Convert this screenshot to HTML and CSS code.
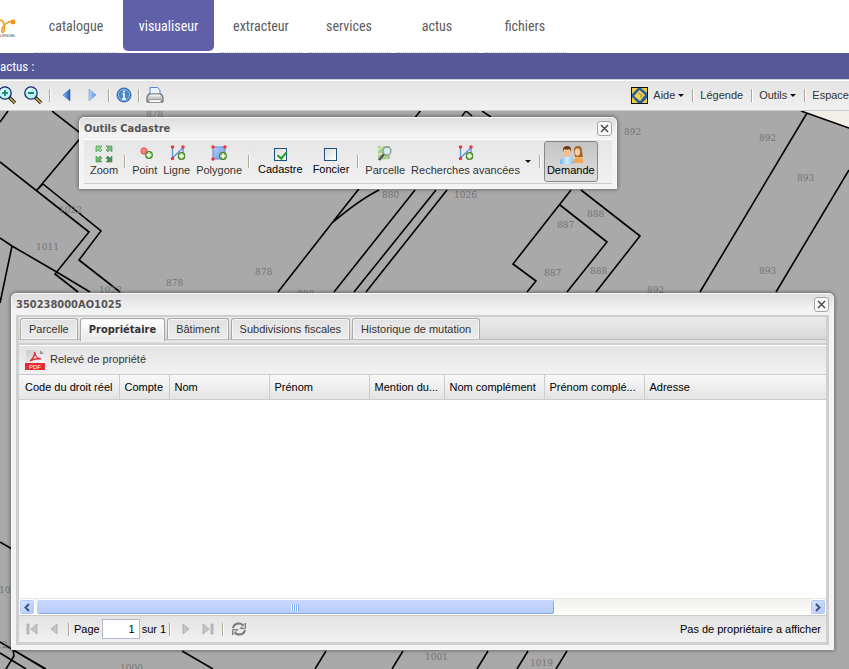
FILE: index.html
```html
<!DOCTYPE html>
<html lang="fr">
<head>
<meta charset="utf-8">
<title>Visualiseur</title>
<link rel="stylesheet" href="styles.css">
</head>
<body>
<svg class="defs" aria-hidden="true">
  <defs>
    <linearGradient id="blue" x1="0" x2="1"><stop offset="0" stop-color="#8dbdf5"/><stop offset="1" stop-color="#1f58bd"/></linearGradient>
    <linearGradient id="pale" x1="0" x2="1"><stop offset="0" stop-color="#b5d3f8"/><stop offset="1" stop-color="#5a8fdc"/></linearGradient>
    <linearGradient id="poly" x1="0" y1="0" x2="1" y2="1"><stop offset="0" stop-color="#b4cdf6"/><stop offset="1" stop-color="#6f9be6"/></linearGradient>
    <linearGradient id="shirt" x1="0" x2="1"><stop offset="0" stop-color="#6db5ea"/><stop offset=".5" stop-color="#d5efff"/><stop offset="1" stop-color="#77bdea"/></linearGradient>
    <linearGradient id="page-bg" x1="0" y1="0" x2="1" y2="1"><stop offset="0" stop-color="#c9c9c9"/><stop offset="1" stop-color="#fff"/></linearGradient>
    <symbol id="plus" viewBox="0 0 8 8"><circle cx="4" cy="4" r="3.9" fill="#3f7f22"/><circle cx="4" cy="4" r="2.9" fill="#8abb65"/><path d="M4 1.6v4.8M1.6 4h4.8" stroke="#fff" stroke-width="1.4"/></symbol>
    <symbol id="line" viewBox="0 0 16 16"><path d="M2.5 2v11L13 2.500V13" fill="none" stroke="#5e8fe0" stroke-width="1.300"/><g fill="#f03535"><circle cx="2.500" cy="2" r="1.700"/><circle cx="13" cy="2" r="1.700"/><circle cx="2.500" cy="13.500" r="1.700"/></g><use href="#plus" x="7.500" y="7" width="8" height="8"/></symbol>
    <symbol id="lens" viewBox="0 0 20 20"><path d="M12 12l6 6" stroke="#222" stroke-width="3.400"/><path d="M13 13l5 5" stroke="#d9bc4f" stroke-width="1.500"/><circle cx="8" cy="8" r="6.200" fill="#bdf3f5" stroke="#16286b" stroke-width="1.300"/><path d="M4.500 7a4 4 0 0 1 3-3" stroke="#fff" stroke-width="1.500" fill="none"/></symbol>
    <symbol id="close" viewBox="0 0 15 15"><rect x=".5" y=".5" width="14" height="14" rx="2.500" fill="#f8f8f8" stroke="#a6a6a6"/><path d="M4 4l7 7M11 4l-7 7" stroke="#444" stroke-width="1.400"/></symbol>
  </defs>
</svg>

<header class="top">
  <svg class="logo" viewBox="0 0 28 52" aria-label="Logo">
    <path d="M0 20c4 0 5 6 4 11-1 3-3 1-2-2 2-5 5-7 10-8" fill="none" stroke="#f39a1c" stroke-width="1.600"/>
    <circle cx="13" cy="22" r="2.400" fill="#f7960a"/>
    <text x="0" y="37" class="logo-text">LENGEL</text>
  </svg>
  <nav class="nav">
    <a href="#">catalogue</a>
    <a href="#" class="current">visualiseur</a>
    <a href="#">extracteur</a>
    <a href="#">services</a>
    <a href="#">actus</a>
    <a href="#">fichiers</a>
  </nav>
</header>
<div class="news">actus :</div>

<div class="toolbar">
  <div class="group">
    <button aria-label="Zoom avant"><svg width="20" height="20"><use href="#lens"/><path d="M8 5v6M5 8h6" stroke="#0b7a5c" stroke-width="1.600"/></svg></button>
    <button aria-label="Zoom arrière"><svg width="20" height="20"><use href="#lens"/><path d="M5 8h6" stroke="#0b7a5c" stroke-width="1.800"/></svg></button>
    <i class="sep"></i>
    <button aria-label="Précédent"><svg width="19" height="16"><path d="M13 2v12L6 8z" fill="url(#blue)" stroke="#3568c0" stroke-width=".6"/></svg></button>
    <button aria-label="Suivant"><svg width="20" height="16"><path d="M7 2v12l7-6z" fill="url(#pale)" stroke="#6f9bdd" stroke-width=".6"/></svg></button>
    <i class="sep"></i>
    <button aria-label="Information"><svg width="16" height="16"><circle cx="8" cy="8" r="7" fill="#4a86c6" stroke="#3068ab"/><circle cx="8" cy="8" r="5.500" fill="none" stroke="#8fb9e2"/><path d="M8 3.500v2M6.500 7H8v5M6 12h4" stroke="#fff" stroke-width="1.600" fill="none"/></svg></button>
    <i class="sep"></i>
    <button aria-label="Imprimer"><svg width="18" height="18"><path d="M4 9V1.500h7.500L14 4v5z" fill="#eaf3ff" stroke="#5585cc"/><path d="M2.500 8h13l1.500 3v5H1v-5z" fill="#c9c9c9" stroke="#555"/><path d="M4 8.500h10v2H4z" fill="#f2f2f2"/><path d="M3 13.500h12v3H3z" fill="#f7f7f7" stroke="#777" stroke-width=".7"/></svg></button>
  </div>
  <div class="group menu">
    <svg width="17" height="17"><rect x=".5" y=".5" width="16" height="16" fill="#27619a"/><path d="M1 1h6L1 7zM10 1h6v5zM1 10l6 6H1zM16 11v5h-5z" fill="#f4cc45"/><path d="M8.500 3l5.500 5-5 6-6-5z" fill="#f8d24a"/><path d="M7.500 6l3.500 2.500-1.500 2" fill="none" stroke="#55778c"/><rect x=".5" y=".5" width="16" height="16" fill="none" stroke="#111"/></svg>
    <button>Aide<b class="caret"></b></button>
    <i class="sep"></i>
    <button>Légende</button>
    <i class="sep"></i>
    <button>Outils<b class="caret"></b></button>
    <i class="sep"></i>
    <button class="last">Espace</button>
  </div>
</div>

<main class="map">
  <svg class="parcels" aria-label="Plan cadastral">
    <g transform="translate(0 -111)">
      <path class="outside" d="M801 111h400v142L849 128z"/>
      <g class="lines">
        <path d="M8 111L0 122M52 111l31 24L37 190M0 162l89 70-34 42 23 18M37 190l6-6 58 47-22 29 41 32M0 238l12 8 43 25 35 21M12 246L0 303"/>
        <path d="M421 110l-63 80-26 33-54 69M379 190q-20 10-47 33M415 190l-81 102M436 190l-82 102M466 111l-4 5M466 111l6 5M482 111l9 6M447 190l-81 102"/>
        <path d="M571 190l-58 74 23 17-9 11M560 205l47 37-40 50M581 190l59 46-44 56M807 113L700 292M801 111l48 17 352 125M849 170l-73 122"/>
        <path d="M0 542l12 7M0 642l45 27M0 653l26 16M13 649l1 7-8 13M15 651l31 18M182 651l31 18M326 651l-11 18M403 651l-11 18M488 651l-11 18M528 651l-11 18M567 651l-11 18"/>
      </g>
      <g class="numbers">
        <text x="146" y="117">878</text><text x="624" y="135">892</text><text x="759" y="141">892</text><text x="797" y="181">893</text><text x="759" y="274">893</text><text x="647" y="293">892</text><text x="587" y="217">888</text><text x="557" y="228">887</text><text x="544" y="276">887</text><text x="590" y="274">888</text><text x="382" y="198">880</text><text x="454" y="198">1026</text><text x="59" y="213">1022</text><text x="36" y="250">1011</text><text x="255" y="275">878</text><text x="166" y="286">878</text><text x="99" y="293">1022</text><text x="297" y="297">880</text><text x="120" y="671">1000</text><text x="425" y="660">1001</text><text x="530" y="666">1019</text><text x="-1" y="593">1022</text><text x="-4" y="648">12</text>
      </g>
    </g>
  </svg>

  <section class="window tools" aria-label="Outils Cadastre">
    <div class="title"><h2>Outils Cadastre</h2><button class="close" aria-label="Fermer"><svg width="15" height="15"><use href="#close"/></svg></button></div>
    <div class="toolrow">
      <button class="tool"><svg width="20" height="18"><g stroke="#3f8f43" stroke-width=".6"><path d="M2 1h6L6 3l2 2-2 2-2-2-2 2z" fill="#8fd38f"/><path d="M18 1h-6l2 2-2 2 2 2 2-2 2 2z" fill="#7cba7c"/><path d="M2 17h6l-2-2 2-2-2-2-2 2-2-2z" fill="#6cb36c"/><path d="M18 17h-6l2-2-2-2 2-2 2 2 2-2z" fill="#4d8f52"/></g></svg>Zoom</button>
      <i class="sep"></i>
      <button class="tool"><svg width="20" height="18"><circle cx="9" cy="6" r="3.200" fill="#f68282" stroke="#e55"/><use href="#plus" x="10" y="6" width="8" height="8"/></svg>Point</button>
      <button class="tool"><svg width="18" height="18"><use href="#line" x="2" width="16" height="16"/></svg>Ligne</button>
      <button class="tool"><svg width="18" height="18"><path d="M3 2h12v12H3z" fill="url(#poly)" stroke="#5f8ede"/><g fill="#f03535"><circle cx="3" cy="2" r="1.700"/><circle cx="15" cy="2" r="1.700"/><circle cx="3" cy="14" r="1.700"/></g><use href="#plus" x="9" y="7" width="8" height="8"/></svg>Polygone</button>
      <i class="sep"></i>
      <label class="check"><input type="checkbox" checked>Cadastre</label>
      <label class="check"><input type="checkbox">Foncier</label>
      <i class="sep"></i>
      <button class="tool"><svg width="18" height="18"><path d="M2 1h12v13l-12 1z" fill="#a9cf91"/><path d="M2 5l5-4M3 13l8-6M2 9h6" stroke="#e4efcb" stroke-width="1.500"/><path d="M8 9l-5 6" stroke="#555" stroke-width="2.500"/><circle cx="11" cy="6" r="4" fill="#d4ecea" stroke="#8a9a98" stroke-width="1.300"/></svg>Parcelle</button>
      <button class="tool"><svg width="16" height="18"><use href="#line" width="16" height="16"/></svg>Recherches avancées</button>
      <b class="caret"></b>
      <i class="sep"></i>
      <button class="tool pressed"><svg width="26" height="20"><path d="M2 20q-1-7 7-7 8 0 7 7z" fill="url(#shirt)"/><path d="M16 19q-1-6 5-6 5 0 4 6z" fill="#f6a552"/><path d="M16 6q0-4 4-4t4 5l1 6h-8z" fill="#a06425"/><ellipse cx="19.500" cy="8" rx="2.600" ry="3.800" fill="#f8cda0"/><ellipse cx="9" cy="8" rx="3.600" ry="5" fill="#f4bf8b"/><path d="M5 8Q4 2 9 2t4 6L12 5Q8 6 6 5z" fill="#633a17"/></svg>Demande</button>
    </div>
  </section>

  <section class="window record" aria-label="350238000AO1025">
    <div class="title"><h2>350238000AO1025</h2><button class="close" aria-label="Fermer"><svg width="15" height="15"><use href="#close"/></svg></button></div>
    <div class="frame">
      <div class="tabs" role="tablist">
        <button role="tab">Parcelle</button>
        <button role="tab" class="active" aria-selected="true">Propriétaire</button>
        <button role="tab">Bâtiment</button>
        <button role="tab">Subdivisions fiscales</button>
        <button role="tab">Historique de mutation</button>
      </div>
      <div class="actions">
        <button><svg width="20" height="20"><path d="M1 0h14l4 4v9H1z" fill="url(#page-bg)"/><path d="M15 0l4 4h-4z" fill="#999"/><path d="M5 11q5-4 4.500-9 1 6 6.500 7-6-1-11 2" fill="none" stroke="#e03038" stroke-width="1.300"/><path d="M0 13h20v7H0z" fill="#e32b35"/><text x="10" y="19" class="pdf">PDF</text></svg>Relevé de propriété</button>
      </div>
      <div class="grid">
        <table>
          <colgroup><col class="w100"><col class="w50"><col class="w100"><col class="w100"><col class="w75"><col class="w100"><col class="w100"><col></colgroup>
          <thead><tr><th>Code du droit réel</th><th>Compte</th><th>Nom</th><th>Prénom</th><th>Mention du...</th><th>Nom complément</th><th>Prénom complé...</th><th>Adresse</th></tr></thead>
        </table>
      </div>
      <div class="hscroll">
        <button aria-label="Défiler à gauche"><svg width="8" height="9"><path d="M6 1L2.500 4.500 6 8" fill="none" stroke="#3d5583" stroke-width="2"/></svg></button>
        <div class="track"><div class="thumb"><i></i></div></div>
        <button aria-label="Défiler à droite"><svg width="8" height="9"><path d="M2 1l3.500 3.500L2 8" fill="none" stroke="#3d5583" stroke-width="2"/></svg></button>
      </div>
      <div class="paging">
        <button aria-label="Première page"><svg width="12" height="12"><path d="M1 1h2v10H1zM11 1v10L5 6z" fill="#c5c5c5" stroke="#999" stroke-width=".6"/></svg></button>
        <button aria-label="Page précédente"><svg width="12" height="12"><path d="M9 1v10L3 6z" fill="#c5c5c5" stroke="#999" stroke-width=".6"/></svg></button>
        <i class="sep"></i>
        <label for="page">Page</label><input id="page" type="text" value="1"><span>sur 1</span>
        <i class="sep"></i>
        <button aria-label="Page suivante"><svg width="12" height="12"><path d="M3 1v10l6-5z" fill="#c5c5c5" stroke="#999" stroke-width=".6"/></svg></button>
        <button aria-label="Dernière page"><svg width="12" height="12"><path d="M1 1v10l6-5zM9 1h2v10H9z" fill="#c5c5c5" stroke="#999" stroke-width=".6"/></svg></button>
        <i class="sep"></i>
        <button aria-label="Actualiser"><svg width="16" height="16"><path d="M2 7Q3 2.500 8 2.500q3 0 4 2M14 9Q13 13.500 8 13.500q-3 0-4-2" fill="none" stroke="#777" stroke-width="2"/><path d="M14.500 2v5.500H9zM1.500 14V8.500H7z" fill="#ccc" stroke="#666" stroke-width=".8"/></svg></button>
        <span class="status">Pas de propriétaire a afficher</span>
      </div>
    </div>
  </section>
</main>
</body>
</html>
```
FILE: styles.css
```css
* { box-sizing: border-box; }
body {
  margin: 0;
  height: 100vh;
  display: flex;
  flex-direction: column;
  overflow: hidden;
  background: #fff;
  color: #333;
  font: 11px/13px "Liberation Sans", sans-serif;
}
button {
  margin: 0;
  padding: 0;
  border: 0;
  background: none;
  color: inherit;
  font: inherit;
  white-space: nowrap;
}
svg { display: block; flex: none; }
.defs { position: absolute; width: 0; height: 0; }

.top { display: flex; flex: none; height: 53px; }
.logo { width: 28px; height: 52px; margin-right: 7px; }
.logo-text { font: 4px "Liberation Sans", sans-serif; fill: #444; }
.nav { display: flex; gap: 6px; }
.nav a {
  width: 82px;
  height: 53px;
  border-bottom: 1px dotted #ccc;
  color: #5c5c5c;
  font: 14px/53px "Roboto Condensed", "Noto Sans Condensed", "DejaVu Sans Condensed", sans-serif;
  text-align: center;
  text-decoration: none;
}
.nav .current {
  width: 91px;
  height: 51px;
  border: 0;
  border-radius: 0 0 5px 5px;
  background: #5f60a8;
  color: #fff;
}
.news {
  flex: none;
  height: 26px;
  background: #575898;
  color: #fff;
  font: 13px/27px "Roboto Condensed", "Noto Sans Condensed", "Roboto", sans-serif;
}

.toolbar {
  display: flex;
  flex: none;
  justify-content: space-between;
  height: 32px;
  border-top: 1px solid #cfcfd8;
  border-bottom: 1px solid #ccc;
  background: linear-gradient(#e3e3e3, #f1f1f1);
  box-shadow: inset 0 1px #fff;
}
.group { display: flex; align-items: center; }
.group button { display: flex; align-items: center; padding: 0 3px; }
.group:first-child { margin-left: -6px; }
.group.menu button { padding: 0 5px; }
.group.menu .last { padding-right: 0; }
.sep {
  flex: none;
  width: 2px;
  height: 13px;
  margin: 0 3px;
  border-left: 1px solid #aca899;
  background: #fff;
}
.menu .sep { margin: 0 1px 0 3px; }
.caret {
  display: inline-block;
  flex: none;
  margin-left: 3px;
  border: 3px solid transparent;
  border-top-color: #111;
  border-bottom: 0;
}

.map { position: relative; flex: 1; min-height: 0; overflow: hidden; background: #a9a9a9; }
.parcels { width: 100%; height: 100%; }
.lines { fill: none; stroke: #000; stroke-width: 1.6; }
.outside { fill: #f2efe9; }
.numbers { fill: #737373; font: 9px "DejaVu Serif", serif; }

.window {
  position: absolute;
  border: 1px solid #fafafa;
  border-radius: 5px 5px 0 0;
  background: linear-gradient(#dedede, #f3f3f3 16px, #f3f3f3);
  box-shadow: 0 0 4px rgba(0, 0, 0, .55);
}
.tools { left: 79px; top: 6px; padding: 0 4px 4px; }
.record {
  left: 11px;
  right: 15px;
  top: 182px;
  bottom: 19px;
  display: flex;
  flex-direction: column;
  padding: 0 4px 4px;
}
.title { display: flex; flex: none; align-items: center; justify-content: space-between; height: 21px; }
.title h2 { margin: 0; color: #555; font: bold 11px/13px "DejaVu Sans Condensed", "DejaVu Sans", sans-serif; }

.toolrow {
  display: flex;
  align-items: center;
  height: 45px;
  padding: 0 14px 0 3px;
  border-top: 1px solid #fff;
  border-bottom: 1px solid #ccc;
  background: linear-gradient(#e6e6e6, #f1f1f1);
}
.tool { display: flex; flex-direction: column; align-items: center; gap: 1px; padding: 0 3px 2px; }
.toolrow .caret { margin: 0 5px 0 2px; }
.pressed {
  gap: 0;
  height: 41px;
  padding: 2px 2px 0;
  border: 1px solid #888;
  border-radius: 3px;
  background: linear-gradient(#c4c4c4, #dedede);
  color: #000;
}
.check { display: flex; flex-direction: column; align-items: center; gap: 2px; padding: 0 5px; color: #000; }
.check input {
  appearance: none;
  width: 13px;
  height: 13px;
  margin: 0;
  border: 1px solid #1c5180;
  background: linear-gradient(135deg, #dcdcd7, #fff);
}
.check input:checked::before {
  content: "";
  display: block;
  width: 4px;
  height: 7px;
  margin: 1px 0 0 4px;
  border: solid #21a121;
  border-width: 0 2px 2px 0;
  transform: rotate(40deg);
}

.frame {
  display: flex;
  flex: 1;
  flex-direction: column;
  min-height: 0;
  border: 3px solid #cfcfcf;
  border-top-width: 2px;
}
.tabs {
  display: flex;
  flex: none;
  gap: 2px;
  height: 28px;
  padding: 1px 1px 4px;
  background: linear-gradient(#ebebeb, #d8d8d8 22px, #bbb 22px, #bbb 23px, #e4e4e4 23px, #e4e4e4 26px, #cfcfcf 26px);
}
.tabs button {
  height: 21px;
  padding: 0 8px;
  border: 1px solid #aaa;
  border-bottom: 0;
  border-radius: 3px 3px 0 0;
  background: linear-gradient(#e2e2e2, #ececec);
  box-shadow: inset 0 0 0 1px #f5f5f5;
}
.tabs .active {
  height: 23px;
  padding-bottom: 2px;
  background: linear-gradient(#fff, #e8e8e8);
  font: bold 11px/13px "DejaVu Sans Condensed", "DejaVu Sans", sans-serif;
}
.actions {
  display: flex;
  flex: none;
  height: 30px;
  padding: 0 6px;
  border-bottom: 1px solid #ccc;
  background: linear-gradient(#e3e3e3, #f1f1f1);
  box-shadow: inset 0 1px #fff;
}
.actions button { display: flex; align-items: center; gap: 5px; }
.pdf { fill: #fff; font: 6px "Liberation Sans", sans-serif; text-anchor: middle; }
.grid { flex: 1; min-height: 0; overflow: hidden; background: #fff; color: #000; }
table { width: 100%; border-collapse: collapse; table-layout: fixed; }
th {
  height: 24px;
  padding: 2px 5px 0;
  border-right: 1px solid #ccc;
  border-bottom: 1px solid #ccc;
  background: linear-gradient(#f8f8f8, #e4e4e4);
  font-weight: normal;
  text-align: left;
  white-space: nowrap;
}
th:first-child { padding-left: 6px; }
th:last-child { border-right: 0; }
.w50 { width: 50px; }
.w75 { width: 75px; }
.w100 { width: 100px; }

.hscroll { display: flex; flex: none; height: 17px; border-top: 1px solid #e8e8e0; background: #f7f7f2; }
.hscroll button {
  display: flex;
  align-items: center;
  justify-content: center;
  width: 16px;
  border: 1px solid #fff;
  border-radius: 3px;
  background: linear-gradient(135deg, #dce6fe, #b0c6f8);
  box-shadow: inset 0 0 0 1px #b4c8f4;
}
.track { flex: 1; padding-left: 1px; background: linear-gradient(#f1f0ea, #fefefc); }
.thumb {
  display: flex;
  align-items: center;
  justify-content: center;
  width: 67%;
  height: 16px;
  border: 1px solid #fff;
  border-radius: 3px;
  background: linear-gradient(#c9d7fc, #b7cdfb);
  box-shadow: inset -1px -1px #86a7df;
}
.thumb i { width: 8px; height: 7px; background: repeating-linear-gradient(90deg, #eef4fe 0, #eef4fe 1px, #8cb0f8 1px, #8cb0f8 2px); }

.paging {
  display: flex;
  flex: none;
  align-items: center;
  height: 27px;
  padding: 0 5px 0 2px;
  border-top: 1px solid #ccc;
  background: linear-gradient(#e3e3e3, #f1f1f1);
  color: #000;
}
.paging button { display: flex; justify-content: center; width: 22px; }
.paging .sep { margin: 0 4px 0 3px; }
.paging input {
  width: 38px;
  height: 20px;
  margin: 0 2px;
  padding: 1px 4px;
  border: 1px solid #b5b8c8;
  background: #fff;
  color: #000;
  font: inherit;
  text-align: right;
}
.status { margin-left: auto; }
```
